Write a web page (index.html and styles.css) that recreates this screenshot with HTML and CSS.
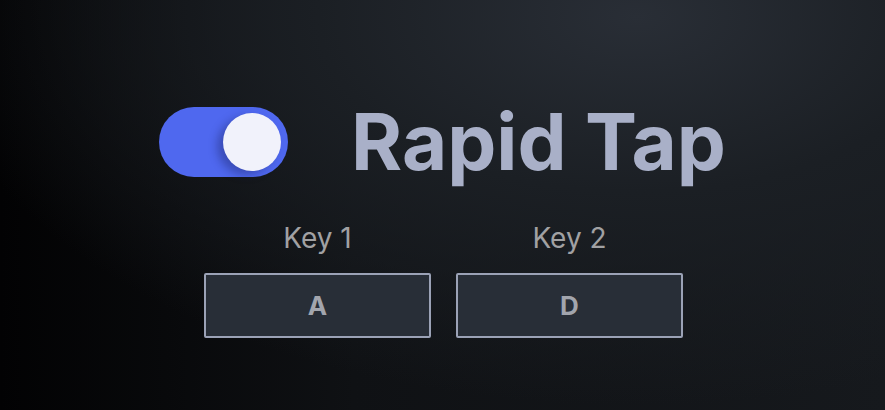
FILE: index.html
```html
<!DOCTYPE html>
<html lang="en">
<head>
    <meta charset="UTF-8">
    <meta name="viewport" content="width=device-width, initial-scale=1.0">
    <title>Rapid Tap</title>
    <link rel="stylesheet" href="styles.css">
</head>
<body>
    <main class="panel">
        <!-- Toggle + title -->
        <div class="header">
            <label class="switch">
                <input type="checkbox" checked>
                <span class="track"><span class="knob"></span></span>
            </label>
            <h1>Rapid Tap</h1>
        </div>

        <!-- Key bindings -->
        <div class="keys">
            <div class="key">
                <span class="key-label">Key 1</span>
                <div class="key-box">A</div>
            </div>
            <div class="key">
                <span class="key-label">Key 2</span>
                <div class="key-box">D</div>
            </div>
        </div>
    </main>
</body>
</html>
```

FILE: styles.css
```css
html, body {
    margin: 0;
    padding: 0;
    height: 100%;
}
body {
    font-family: Inter, "Noto Sans", sans-serif;
    background:
        radial-gradient(ellipse 80% 95% at 72% 4%, #292e36 0%, #1b1f24 45%, rgba(10, 11, 13, 0) 100%),
        linear-gradient(90deg, #020203 0%, #0f1114 40%, #16191d 100%);
    overflow: hidden;
}
.panel {
    display: flex;
    flex-direction: column;
    align-items: center;
    padding-top: 104px;
}
.header {
    display: flex;
    align-items: center;
    gap: 63px;
}
.switch {
    display: block;
    width: 129px;
    height: 70px;
}
.switch input {
    display: none;
}
.track {
    display: flex;
    justify-content: flex-end;
    align-items: center;
    width: 100%;
    height: 100%;
    padding: 0 7px;
    box-sizing: border-box;
    background-color: #4f68ef;
    border-radius: 35px;
}
.knob {
    width: 58px;
    height: 58px;
    border-radius: 50%;
    background-color: #f1f2fb;
    box-shadow: -6px 4px 9px rgba(20, 25, 80, 0.35);
}
h1 {
    margin: 0;
    font-size: 78px;
    line-height: 76px;
    font-weight: 700;
    color: #a9b0c8;
}
.keys {
    display: flex;
    gap: 25px;
    margin-top: 42px;
    margin-left: 2px;
}
.key {
    display: flex;
    flex-direction: column;
    align-items: center;
    gap: 19px;
}
.key-label {
    font-size: 28px;
    line-height: 32px;
    color: #a1a1a3;
}
.key-box {
    width: 227px;
    height: 65px;
    box-sizing: border-box;
    border: 2px solid #9ba2b6;
    border-radius: 2px;
    background-color: #282e37;
    color: #a2a5ad;
    font-size: 26px;
    font-weight: 700;
    display: flex;
    align-items: center;
    justify-content: center;
}
```
